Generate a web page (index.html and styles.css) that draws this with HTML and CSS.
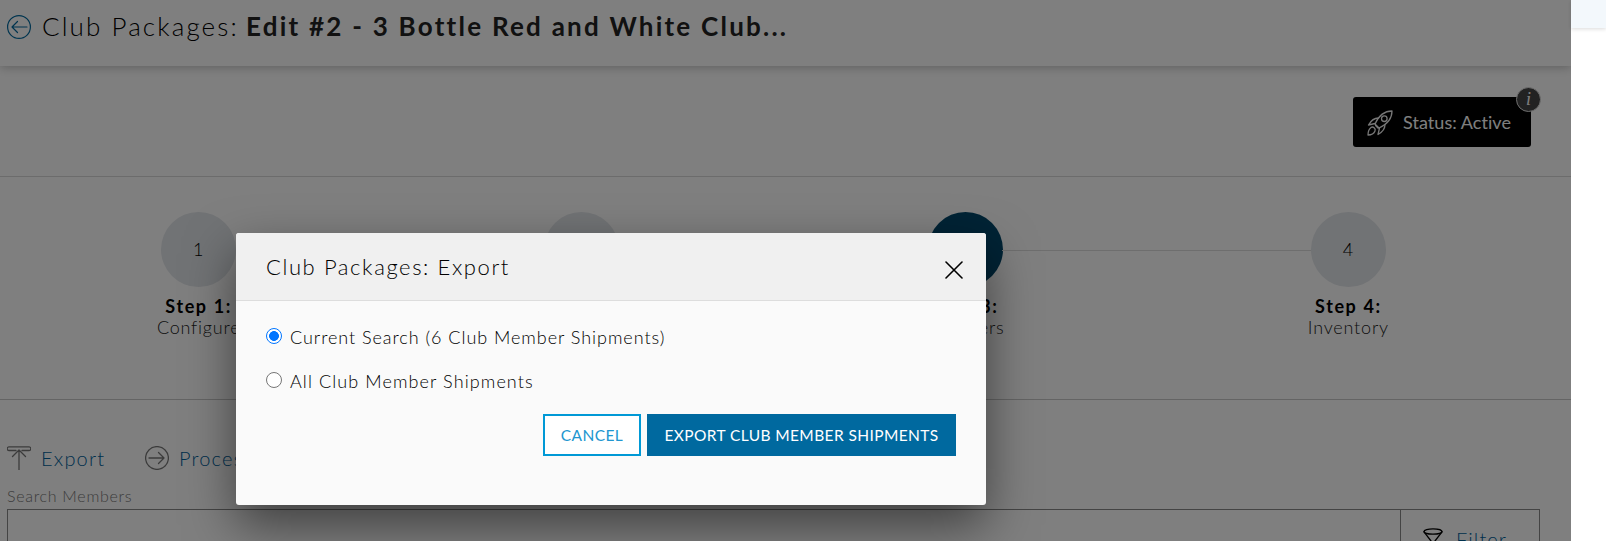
FILE: index.html
```html
<!DOCTYPE html>
<html lang="en">
<head>
    <meta charset="UTF-8">
    <title>Club Packages</title>
    <meta name="viewport" content="width=device-width, initial-scale=1.0">
    <link rel="stylesheet" href="styles.css">
</head>
<body>
    <div class="layout">
        <div class="page">
            <header class="page-header">
                <svg class="icon" width="24" height="24" viewBox="0 0 24 24">
                    <circle cx="12" cy="12" r="11.4"/>
                    <path d="M20 12H5M10.5 6.5L5 12l5.5 5.5"/>
                </svg>
                <h1><span class="title-label">Club Packages:</span> <span class="title-name">Edit #2 - 3 Bottle Red and White Club...</span></h1>
            </header>

            <div class="status-row">
                <div class="status">
                    <svg width="26" height="26" viewBox="0 0 26 26">
                        <path d="M25 1C17 1 12 5 8 14l4 4C21 14 25 9 25 1z"/>
                        <circle cx="17.3" cy="8.7" r="2.8"/>
                        <path d="M11.5 8C7 8 4 10.500 1.500 15L8 13.500M18 14.500c0 4.500-2.500 7.500-7 10L12.500 18M8.500 15.500l2.500 2.500"/>
                        <path d="M4 17.500c2-1.500 5 1 4 3.500C7 23.500 4 25 1 25c0-3 1-6 3-7.500z"/>
                    </svg>
                    <span class="status-text">Status: Active</span>
                    <span class="info">i</span>
                </div>
            </div>

            <div class="steps">
                <div class="step">
                    <div class="circle">1</div>
                    <b>Step 1:</b>
                    <span>Configure</span>
                </div>
                <div class="step">
                    <div class="circle"></div>
                </div>
                <div class="step active">
                    <div class="circle"></div>
                    <b>Step 3:</b>
                    <span>Members</span>
                </div>
                <div class="step">
                    <div class="circle">4</div>
                    <b>Step 4:</b>
                    <span>Inventory</span>
                </div>
            </div>

            <div class="members">
                <div class="toolbar">
                    <a class="tool">
                        <svg width="24" height="24" viewBox="0 0 24 24">
                            <path d="M9 4.500H2A1.500 1.500 0 0 1 2 .8h20a1.500 1.500 0 0 1 0 3.700h-7M12 24V4M5.500 10.500L12 4l6.500 6.500"/>
                        </svg>
                        <span class="tool-export">Export</span>
                    </a>
                    <a class="tool">
                        <svg width="24" height="24" viewBox="0 0 24 24">
                            <circle cx="12" cy="12" r="11.4"/>
                            <path d="M4 12h15M13.500 6.500L19 12l-5.500 5.500"/>
                        </svg>
                        <span class="tool-process">Process</span>
                    </a>
                </div>
                <label class="search-label">Search Members</label>
                <div class="search">
                    <div class="search-field"></div>
                    <a class="filter">
                        <svg width="20" height="20" viewBox="0 0 20 20">
                            <ellipse cx="10" cy="3.500" rx="9" ry="2.700"/>
                            <path d="M1 3.800L8 13v6l4-2v-4l7-9.200"/>
                        </svg>
                        <span>Filter</span>
                    </a>
                </div>
            </div>
            <div class="overlay"></div>
        </div>
        <div class="side"></div>
    </div>

    <div class="modal">
        <div class="modal-header">
            <h2>Club Packages: Export</h2>
            <svg class="close" width="18" height="18" viewBox="0 0 18 18">
                <path d="M1 1l16 16M17 1L1 17"/>
            </svg>
        </div>
        <div class="modal-body">
            <label class="option">
                <span class="radio checked"></span>
                <span class="option-current">Current Search (6 Club Member Shipments)</span>
            </label>
            <label class="option">
                <span class="radio"></span>
                <span class="option-all">All Club Member Shipments</span>
            </label>
            <div class="buttons">
                <button class="cancel">CANCEL</button>
                <button class="export">EXPORT CLUB MEMBER SHIPMENTS</button>
            </div>
        </div>
    </div>
</body>
</html>
```
FILE: styles.css
```css
* {
    box-sizing: border-box;
}
body {
    margin: 0;
    height: 541px;
    overflow: hidden;
    background-color: #fff;
    color: #000;
    font-family: Lato, sans-serif;
    font-weight: 300;
}
svg {
    display: block;
    flex: none;
    fill: none;
    stroke: #777;
    stroke-width: 1.3;
    stroke-linecap: round;
    stroke-linejoin: round;
}
.layout {
    display: flex;
    height: 541px;
}
.page {
    position: relative;
    width: 1571px;
    overflow: hidden;
}
.side {
    flex: 1;
    height: 28px;
    background-color: #f3f8fc;
    box-shadow: 0 1px 4px rgba(0,0,0,0.15);
}
.overlay {
    position: absolute;
    inset: 0;
    background-color: rgba(0,0,0,0.5);
}

/* header */
.page-header {
    display: flex;
    align-items: center;
    height: 66px;
    padding: 0 7px 13px;
    box-shadow: 0 1px 10px rgba(0,0,0,0.27);
}
.page-header .icon {
    stroke: #00699f;
    stroke-width: 1.2;
}
h1 {
    display: flex;
    margin: -2px 0 0 11px;
    font-size: 26px;
    line-height: 32px;
    font-weight: 300;
    white-space: nowrap;
}
.title-label {
    width: 204px;
    letter-spacing: 2.1px;
}
.title-name {
    color: #222;
    font-weight: 700;
    letter-spacing: 2.24px;
}

/* status */
.status-row {
    display: flex;
    justify-content: flex-end;
    height: 111px;
    padding: 31px 40px 0 0;
    border-bottom: 1px solid #d8d8d8;
}
.status {
    position: relative;
    display: flex;
    align-items: center;
    width: 178px;
    height: 50px;
    padding-left: 14px;
    border-radius: 3px;
    background-color: #000;
    color: #fff;
}
.status svg {
    margin-top: 1px;
    stroke: #eee;
}
.status-text {
    margin: -1px 0 0 10px;
    font-size: 18px;
    font-weight: 400;
    letter-spacing: 0.05px;
    white-space: nowrap;
}
.info {
    position: absolute;
    top: -10px;
    right: -10px;
    width: 25px;
    height: 25px;
    border: 1px solid #ddd;
    border-radius: 50%;
    background-color: #444;
    font: italic 18px/22px "Liberation Serif", serif;
    text-align: center;
}

/* steps */
.steps {
    display: grid;
    grid-template-columns: repeat(4, 1fr);
    height: 223px;
    padding: 35px 31px 0 7px;
    border-bottom: 1px solid #c8c8c8;
}
.step {
    position: relative;
    display: flex;
    flex-direction: column;
    align-items: center;
    font-size: 18px;
    line-height: 22px;
    letter-spacing: 0.8px;
}
.step:not(:last-child)::after {
    content: "";
    position: absolute;
    top: 38px;
    left: calc(50% + 37px);
    width: calc(100% - 74px);
    height: 1px;
    background-color: #dcdcdc;
}
.circle {
    display: flex;
    align-items: center;
    justify-content: center;
    width: 75px;
    height: 75px;
    margin-bottom: 8px;
    padding-bottom: 2px;
    border-radius: 50%;
    background-color: #e3e6ea;
}
.step b {
    font-weight: 700;
    letter-spacing: 1.6px;
}
.step span {
    margin-top: -1px;
    color: #222;
}
.active .circle {
    background-color: #00476b;
    color: #fff;
}

/* members */
.members {
    padding: 46px 31px 0 7px;
}
.toolbar {
    display: flex;
    gap: 40px;
    height: 36px;
}
.tool {
    display: flex;
    height: 24px;
    color: #00609a;
    font-size: 20px;
    line-height: 24px;
}
.tool span {
    margin-left: 10px;
    letter-spacing: 1.2px;
}
.tool-export {
    width: 64px;
}
.search-label {
    display: block;
    height: 27px;
    color: #777;
    font-size: 16px;
    line-height: 28px;
    letter-spacing: 0.7px;
}
.search {
    display: flex;
    height: 60px;
    border: 1px solid #888;
}
.search-field {
    flex: 1;
}
.filter {
    display: flex;
    width: 139px;
    padding: 18px 0 0 22px;
    border-left: 1px solid #888;
    color: #00609a;
    font-size: 20px;
    line-height: 22px;
    letter-spacing: 1.1px;
}
.filter svg {
    stroke: #000;
}
.filter span {
    margin-left: 13px;
}

/* modal */
.modal {
    position: absolute;
    top: 232.5px;
    left: 236px;
    width: 750px;
    height: 272.5px;
    border-radius: 3px;
    background-color: #fafafa;
    box-shadow: 0 20px 50px rgba(0,0,0,0.5);
    overflow: hidden;
}
.modal-header {
    display: flex;
    justify-content: space-between;
    height: 68.5px;
    padding: 0 23px 0 30px;
    border-bottom: 1px solid #ddd;
    background-color: #f0f0f0;
}
h2 {
    margin: 0;
    font-size: 22px;
    line-height: 67px;
    font-weight: 300;
    letter-spacing: 1.6px;
    white-space: nowrap;
}
.close {
    margin-top: 28px;
    stroke: #000;
    stroke-width: 1.6;
}
.modal-body {
    padding: 27px 30px 0;
}
.option {
    display: flex;
    height: 44px;
    font-size: 18px;
    line-height: 18px;
    white-space: nowrap;
}
.option span + span {
    margin-left: 8px;
}
.option-current {
    letter-spacing: 0.96px;
}
.option-all {
    letter-spacing: 1.1px;
}
.radio {
    width: 16px;
    height: 16px;
    border: 1px solid #767676;
    border-radius: 50%;
    background-color: #fff;
}
.radio.checked {
    border: 1.5px solid #0075ff;
    background: radial-gradient(circle, #0075ff 4.6px, #fff 5.2px);
}
.buttons {
    display: flex;
    justify-content: flex-end;
    gap: 6px;
    margin-top: -2px;
}
button {
    height: 42px;
    padding: 0;
    border: 2px solid #0099d6;
    background-color: #fff;
    color: #2196d0;
    font-family: inherit;
    font-size: 15.5px;
    white-space: nowrap;
}
.cancel {
    width: 98px;
    letter-spacing: 0.4px;
}
.export {
    width: 309px;
    border-color: #00699f;
    background-color: #00699f;
    color: #fff;
    letter-spacing: 0.4px;
}
```
